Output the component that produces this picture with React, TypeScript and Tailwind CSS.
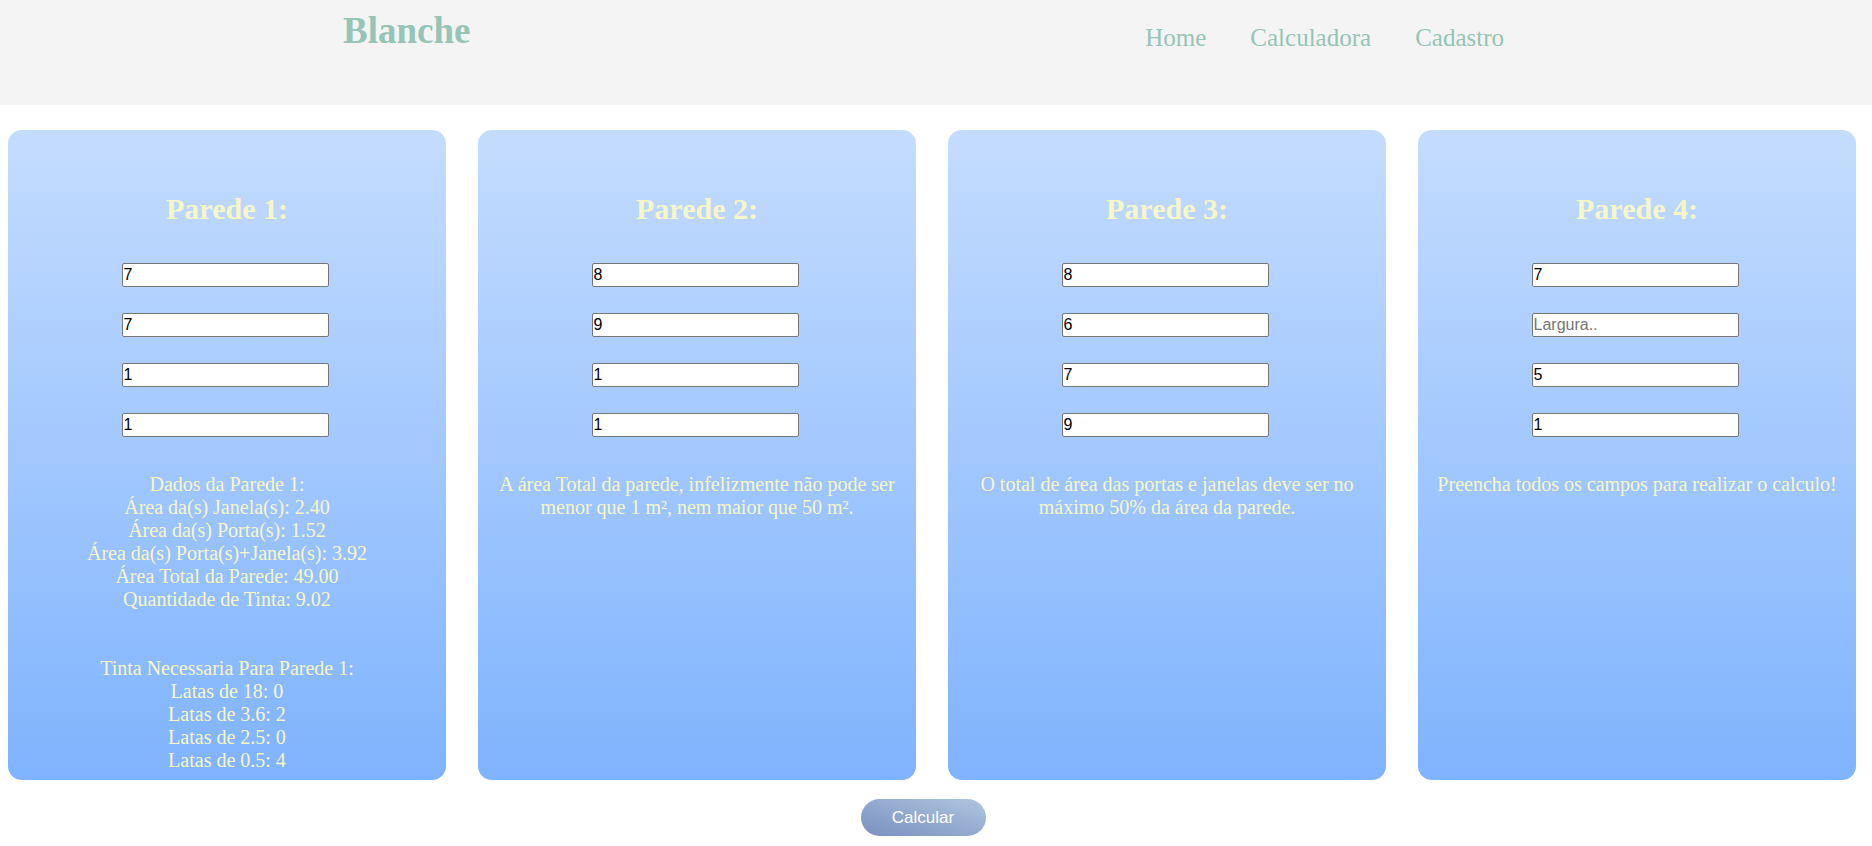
import React, { useState } from 'react';

type Wall = {
  id: number;
  values: string[];
  lines: string[];
};

const WALLS: Wall[] = [
  {
    id: 1,
    values: ['7', '7', '1', '1'],
    lines: [
      'Dados da Parede 1:',
      'Área da(s) Janela(s): 2.40',
      'Área da(s) Porta(s): 1.52',
      'Área da(s) Porta(s)+Janela(s): 3.92',
      'Área Total da Parede: 49.00',
      'Quantidade de Tinta: 9.02',
      '',
      '',
      'Tinta Necessaria Para Parede 1:',
      'Latas de 18: 0',
      'Latas de 3.6: 2',
      'Latas de 2.5: 0',
      'Latas de 0.5: 4',
    ],
  },
  {
    id: 2,
    values: ['8', '9', '1', '1'],
    lines: ['A área Total da parede, infelizmente não pode ser menor que 1 m², nem maior que 50 m².'],
  },
  {
    id: 3,
    values: ['8', '6', '7', '9'],
    lines: ['O total de área das portas e janelas deve ser no máximo 50% da área da parede.'],
  },
  {
    id: 4,
    values: ['7', '', '5', '1'],
    lines: ['Preencha todos os campos para realizar o calculo!'],
  },
];

const PLACEHOLDERS = ['Altura..', 'Largura..', 'Portas..', 'Janelas..'];

const WallCard: React.FC<{ wall: Wall }> = ({ wall }) => {
  const [vals, setVals] = useState<string[]>(wall.values);

  return (
    <div className="w-[438px] h-[650px] shrink-0 rounded-[14px] bg-gradient-to-b from-[#c4dcfe] to-[#7fb3fd] px-[18px] pt-[61px] flex flex-col items-center">
      <h2 className="h-[35px] leading-[35px] text-[30px] font-bold text-[#f7f6c6] mb-[37px]">Parede {wall.id}:</h2>
      <div className="flex flex-col gap-[26px] pr-[4px]">
        {vals.map((v, i) => (
          <input
            key={i}
            value={v}
            placeholder={PLACEHOLDERS[i]}
            onChange={e => setVals(vals.map((x, j) => (j === i ? e.target.value : x)))}
            className="w-[207px] h-[24px] bg-white border border-[#767676] rounded-[2px] px-[1px] text-[16px] text-black placeholder:text-[#757575] font-['Liberation_Sans',Arial,sans-serif] outline-none"
          />
        ))}
      </div>
      <div className="mt-[36px] text-[20px] leading-[23px] text-[#f7f6c6] text-center">
        {wall.lines.map((l, i) => (
          <p key={i} className="min-h-[23px]">{l}</p>
        ))}
      </div>
    </div>
  );
};

export default function App() {
  return (
    <div className="min-h-screen bg-white font-['Liberation_Serif','Times_New_Roman',serif]">
      <header className="h-[105px] bg-[#f4f4f4] flex items-start">
        <h1 className="ml-[343px] mt-[10px] text-[37px] leading-[42px] font-bold text-[#96c4b5]">Blanche</h1>
        <nav className="ml-auto mr-[368px] mt-[23px] flex gap-[44px] text-[25px] leading-[29px] text-[#96c4b5]">
          <a href="#">Home</a>
          <a href="#">Calculadora</a>
          <a href="#">Cadastro</a>
        </nav>
      </header>

      <main className="pt-[25px] pl-[8px] flex gap-[32px]">
        {WALLS.map(w => (
          <WallCard key={w.id} wall={w} />
        ))}
      </main>

      <div className="flex justify-center pr-[26px] mt-[19px]">
        <button className="w-[125px] h-[37px] rounded-full bg-gradient-to-tr from-[#7890bf] to-[#b0c6e0] text-white text-[17px] font-['Liberation_Sans',Arial,sans-serif]">
          Calcular
        </button>
      </div>
    </div>
  );
}
